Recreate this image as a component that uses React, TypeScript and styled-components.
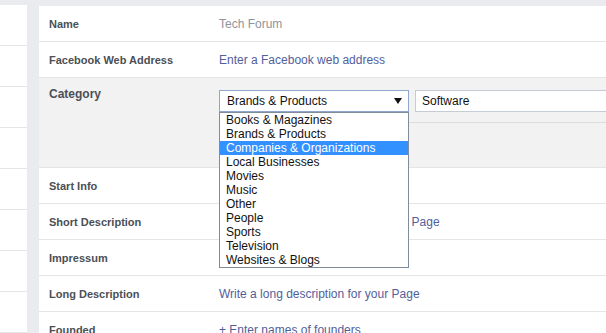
import React from "react";
import styled, { createGlobalStyle } from "styled-components";

const GlobalStyle = createGlobalStyle`
  html, body {
    margin: 0;
    padding: 0;
    background: #e9ebee;
    overflow: hidden;
  }
  body {
    font-family: "Liberation Sans", Arial, sans-serif;
    -webkit-font-smoothing: antialiased;
  }
`;

const categories = [
  "Books & Magazines",
  "Brands & Products",
  "Companies & Organizations",
  "Local Businesses",
  "Movies",
  "Music",
  "Other",
  "People",
  "Sports",
  "Television",
  "Websites & Blogs",
];

const Page = styled.div`
  display: flex;
  align-items: flex-start;
  gap: 12px;
  width: 606px;
  height: 333px;
  overflow: hidden;
`;

const SideNav = styled.div`
  width: 27px;
  flex-shrink: 0;
  margin-top: 5px;
  background: #fff;
`;

const SideItem = styled.div`
  height: 40px;
  border-bottom: 1px solid #e5e5e5;
`;

const Panel = styled.div`
  flex: 0 0 600px;
  margin-top: 6px;
  background: #fff;
`;

const Row = styled.div<{ $editing?: boolean }>`
  display: flex;
  align-items: ${(p) => (p.$editing ? "flex-start" : "center")};
  min-height: 35px;
  border-bottom: 1px solid #e5e5e5;
  background: ${(p) => (p.$editing ? "#f2f2f2" : "#fff")};
`;

const Label = styled.div<{ $large?: boolean }>`
  width: 170px;
  flex-shrink: 0;
  padding-left: 10px;
  font-size: ${(p) => (p.$large ? "12px" : "11px")};
  font-weight: bold;
  color: #4b4f56;
  line-height: 16px;
  margin-top: ${(p) => (p.$large ? "8px" : "0")};
`;

const ValueText = styled.div<{ $tone?: "muted" | "link" }>`
  font-size: 12px;
  line-height: 16px;
  color: ${(p) => (p.$tone === "muted" ? "#90949c" : "#52609a")};
  white-space: nowrap;
`;

const CategoryEditor = styled.div`
  position: relative;
  flex: 1;
  height: 89px;
  padding-top: 12px;
  box-sizing: border-box;
`;

const Fields = styled.div`
  display: flex;
  gap: 6px;
`;

const SelectBox = styled.div`
  display: flex;
  align-items: center;
  justify-content: space-between;
  width: 190px;
  height: 22px;
  box-sizing: border-box;
  padding: 0 6px 0 7px;
  border: 1px solid #8fa6cf;
  background: #fff;
  font-size: 12px;
  color: #111;
`;

const TextInput = styled.div`
  display: flex;
  align-items: center;
  width: 260px;
  height: 22px;
  box-sizing: border-box;
  padding-left: 6px;
  border: 1px solid #c5ccd6;
  background: #fff;
  font-size: 12px;
  color: #111;
`;

const Divider = styled.div`
  margin-top: 10px;
  border-top: 1px solid #dcdcdc;
`;

const OptionList = styled.ul`
  position: absolute;
  left: 0;
  top: 34px;
  width: 190px;
  margin: 0;
  padding: 0;
  list-style: none;
  box-sizing: border-box;
  border: 1px solid #7f8c9c;
  background: #fff;
  z-index: 2;
`;

const OptionItem = styled.li<{ $active?: boolean }>`
  height: 14px;
  line-height: 14px;
  padding-left: 6px;
  font-size: 12px;
  color: ${(p) => (p.$active ? "#fff" : "#111")};
  background: ${(p) => (p.$active ? "#3390ff" : "transparent")};
  white-space: nowrap;
`;

const Arrow = () => (
  <svg width="8" height="6" viewBox="0 0 8 6">
    <polygon points="0,0 8,0 4,6" fill="#111" />
  </svg>
);

// values hidden behind the open list are left empty
const rows = [
  { label: "Start Info", value: "" },
  { label: "Short Description", value: "Write a short description about your Page" },
  { label: "Impressum", value: "" },
  { label: "Long Description", value: "Write a long description for your Page" },
  { label: "Founded", value: "+ Enter names of founders" },
];

export default function App() {
  return (
    <>
      <GlobalStyle />
      <Page>
        <SideNav>
          {Array.from({ length: 8 }).map((_, i) => (
            <SideItem key={i} />
          ))}
        </SideNav>
        <Panel>
          <Row>
            <Label>Name</Label>
            <ValueText $tone="muted">Tech Forum</ValueText>
          </Row>
          <Row>
            <Label>Facebook Web Address</Label>
            <ValueText $tone="link">Enter a Facebook web address</ValueText>
          </Row>
          <Row $editing>
            <Label $large>Category</Label>
            <CategoryEditor>
              <Fields>
                <SelectBox>
                  <span>Brands &amp; Products</span>
                  <Arrow />
                </SelectBox>
                <TextInput>Software</TextInput>
              </Fields>
              <Divider />
              <OptionList>
                {categories.map((c) => (
                  <OptionItem key={c} $active={c === "Companies & Organizations"}>
                    {c}
                  </OptionItem>
                ))}
              </OptionList>
            </CategoryEditor>
          </Row>
          {rows.map((r) => (
            <Row key={r.label}>
              <Label>{r.label}</Label>
              {r.value && <ValueText $tone="link">{r.value}</ValueText>}
            </Row>
          ))}
        </Panel>
      </Page>
    </>
  );
}
